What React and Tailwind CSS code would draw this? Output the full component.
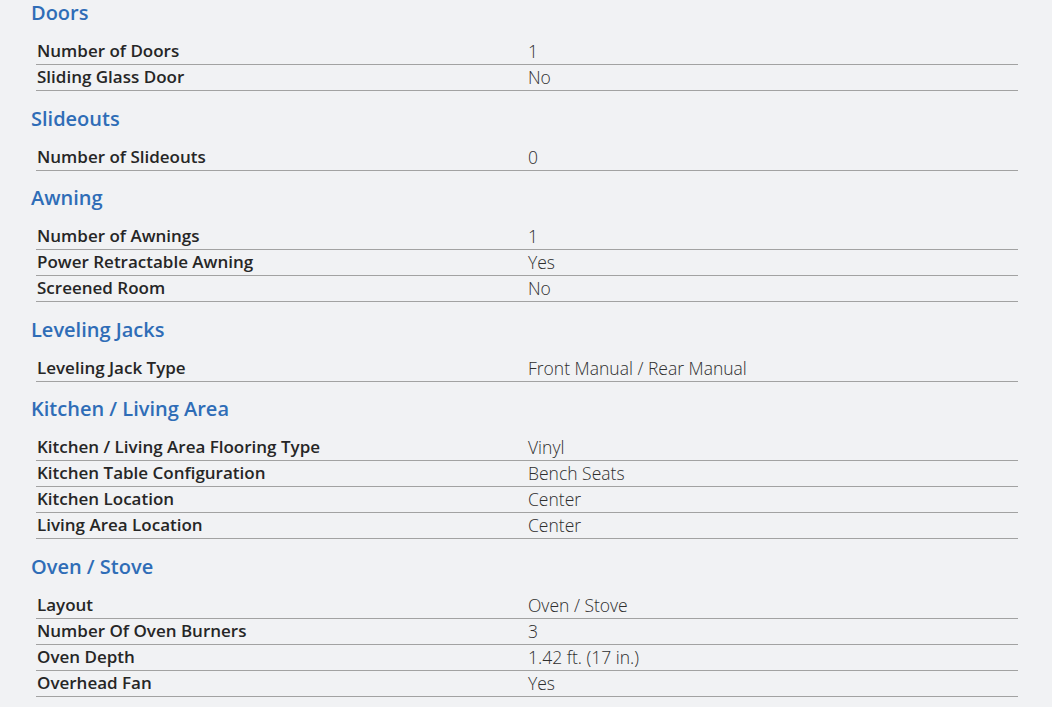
const sections = [
  { title: 'Doors', rows: [['Number of Doors', '1'], ['Sliding Glass Door', 'No']] },
  { title: 'Slideouts', rows: [['Number of Slideouts', '0']] },
  {
    title: 'Awning',
    rows: [
      ['Number of Awnings', '1'],
      ['Power Retractable Awning', 'Yes'],
      ['Screened Room', 'No'],
    ],
  },
  { title: 'Leveling Jacks', rows: [['Leveling Jack Type', 'Front Manual / Rear Manual']] },
  {
    title: 'Kitchen / Living Area',
    rows: [
      ['Kitchen / Living Area Flooring Type', 'Vinyl'],
      ['Kitchen Table Configuration', 'Bench Seats'],
      ['Kitchen Location', 'Center'],
      ['Living Area Location', 'Center'],
    ],
  },
  {
    title: 'Oven / Stove',
    rows: [
      ['Layout', 'Oven / Stove'],
      ['Number Of Oven Burners', '3'],
      ['Oven Depth', '1.42 ft. (17 in.)'],
      ['Overhead Fan', 'Yes'],
    ],
  },
];

export default function App() {
  return (
    <div className="min-h-[707px] w-[1052px] overflow-hidden bg-[#f1f2f4] pl-[31px] pr-[34px] font-['Open_Sans',sans-serif]">
      {sections.map((s, i) => (
        <div key={s.title} className={i === 0 ? '' : 'mt-[14.5px]'}>
          <h3 className="h-[26px] text-[20px] leading-[26px] font-semibold text-[#2f6db7]">{s.title}</h3>
          <div className="ml-[5px] mt-[13px]">
            {s.rows.map(([label, value]) => (
              <div key={label} className="grid h-[26px] grid-cols-2 border-b border-[#a2a2a2] leading-[24px]">
                <span className="pl-px text-[17px] font-semibold text-[#262626]">{label}</span>
                <span className="pl-px text-[17.5px] font-light text-[#2e2e2e]">{value}</span>
              </div>
            ))}
          </div>
        </div>
      ))}
    </div>
  );
}
